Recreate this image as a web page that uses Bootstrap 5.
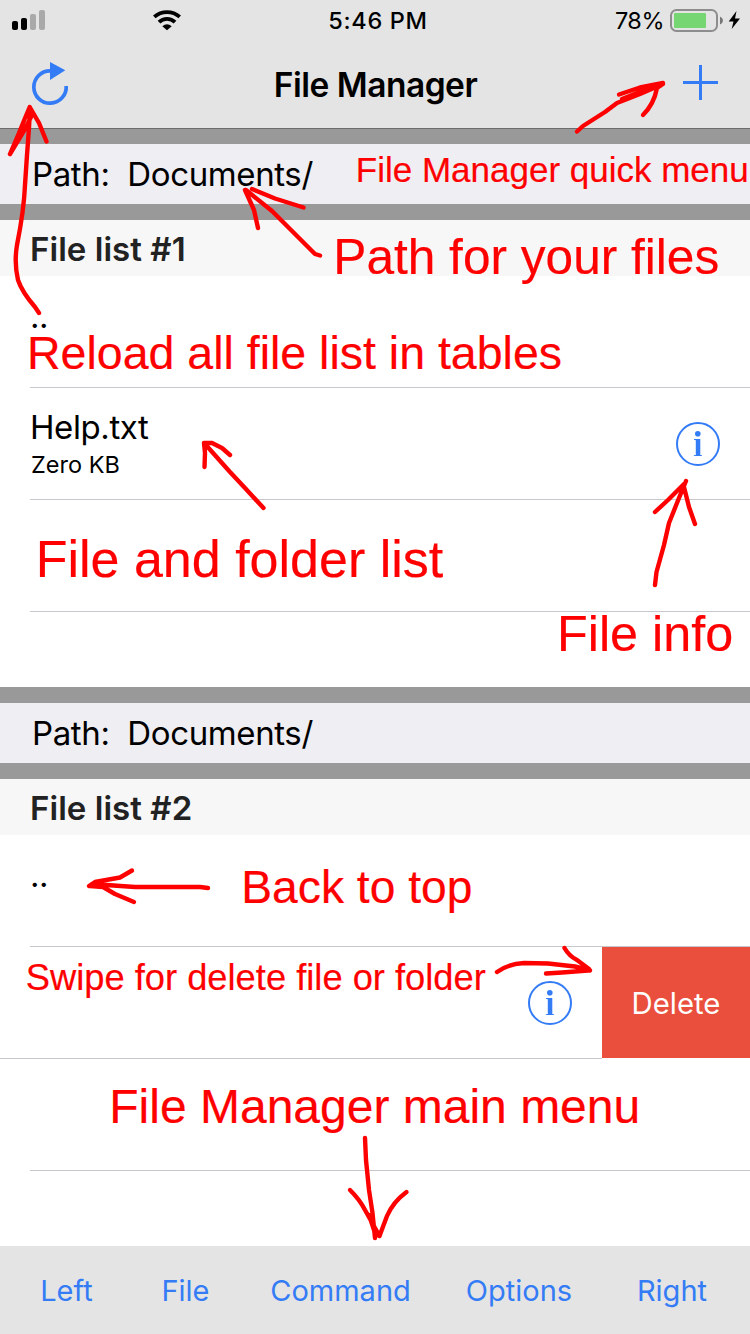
<!DOCTYPE html>
<html lang="en">
<head>
<meta charset="utf-8">
<meta name="viewport" content="width=device-width, initial-scale=1">
<title>File Manager</title>
<link href="https://cdn.jsdelivr.net/npm/bootstrap@5.3.0/dist/css/bootstrap.min.css" rel="stylesheet">
<style>
:root { --tint: #347cf6; --chrome: #e4e4e4; --divider: #999; --hairline: #c8c7cc; }
body { width: 750px; height: 1334px; overflow: hidden; background: #fff; color: #000; font-family: Inter, sans-serif; line-height: 1.2; }
.top-chrome { height: 129px; background: var(--chrome); border-bottom: 1px solid #6c6c6c; }
.status-row { height: 40px; font-size: 23.5px; }
.status-row > div { flex: 1 1 0; }
.clock { font-weight: 500; letter-spacing: .7px; padding-top: 2px; }
.charge { letter-spacing: -.5px; padding-top: 2px; }
.title-row { height: 88px; padding: 0 28px; }
.page-title { font-size: 33.5px; font-weight: 600; letter-spacing: -.5px; padding: 2px 0 0 1px; }
.pane { height: 559px; }
.pane-first { height: 558px; }
.gap-bar { height: 16px; background: var(--divider); }
.pane-first .gap-bar:first-child { height: 15px; }
.path-row { height: 60px; padding: 2px 0 0 32px; background: #efeef3; font-size: 33px; letter-spacing: -.38px; white-space: pre; }
.list-title { height: 56px; padding: 3px 0 0 30px; background: #f7f7f7; color: #222; font-size: 33px; font-weight: 600; letter-spacing: .05px; }
.file-row { height: 112px; padding-left: 30px; }
.file-row > .cell-body { border-bottom: 1px solid var(--hairline); height: 112px; }
.file-row > .parent-link { padding-bottom: 31px; }
.file-name { font-size: 33px; letter-spacing: -.4px; line-height: 38px; }
.file-size { font-size: 23.5px; line-height: 36px; padding: 1px 0 0 1px; }
.file-text { padding-top: 4px; }
.swiped { padding-left: 0; }
.delete-btn { width: 148px; height: 111px; padding-top: 3px; background: #ea4f3d; color: #fff; font-size: 29.3px; }
.bottom-bar { height: 88px; background: var(--chrome); display: grid; grid-template-columns: 133px 105px 205px 152px 154px; }
.bottom-bar a { padding-top: 2px; color: var(--tint); font-size: 29px; text-decoration: none; text-align: center; }
.notes { pointer-events: none; }
.notes text { font-family: "Liberation Sans", Arial, sans-serif; fill: #f00; stroke: #f00; stroke-width: .2; }
.notes path { fill: none; stroke: #f00; stroke-width: 4.4; stroke-linecap: round; stroke-linejoin: round; }
</style>
</head>
<body class="position-relative">
<svg class="d-none">
  <symbol id="info" viewBox="0 0 44 44">
    <circle cx="22" cy="22" r="21" fill="none" stroke="#347cf6" stroke-width="2"/>
    <circle cx="21.800" cy="11.700" r="2.800" fill="#347cf6"/>
    <path d="M18 17h6.300v15.900l1.700.4v.7h-8.200v-.7l2-.4V18.300L18 17.800z" fill="#347cf6"/>
  </symbol>
</svg>

<header class="top-chrome">
  <div class="status-row d-flex align-items-center">
    <div>
      <svg class="d-block" width="250" height="40">
        <rect x="12" y="21" width="6" height="9" rx="2"/>
        <rect x="21" y="18" width="6" height="12" rx="2"/>
        <rect x="30" y="14" width="6" height="16" rx="2" fill="#a9a9a9"/>
        <rect x="39" y="10" width="6" height="20" rx="2" fill="#a9a9a9"/>
        <g fill="none" stroke="#000" stroke-width="3.800">
          <path d="M154.300 16.900A19 19 0 0 1 179.700 16.900"/>
          <path d="M159 22.200A11.300 11.300 0 0 1 175 22.200"/>
        </g>
        <path d="M162.300 26.200A7.500 7.500 0 0 1 171.700 26.200L167 30.200z"/>
      </svg>
    </div>
    <div class="clock text-center ps-1">5:46 PM</div>
    <div class="d-flex align-items-center justify-content-end">
      <span class="charge">78%</span>
      <svg width="86" height="40" viewBox="1 0 86 40">
        <rect x="8" y="10" width="46" height="21" rx="5.500" fill="none" stroke="#8d8d8d" stroke-width="2"/>
        <rect x="11" y="13" width="32" height="15" rx="1" fill="#76d672"/>
        <path d="M57 16.500q3 1.500 3 4t-3 4z" fill="#777"/>
        <path d="M73.500 11L65.700 21.400h4.800L68.700 29L77 18.600h-5z"/>
      </svg>
    </div>
  </div>
  <div class="title-row d-flex align-items-center justify-content-between">
    <svg width="44" height="50" viewBox="28 59 44 50">
      <path d="M66.200 86A16.200 16.200 0 1 1 50 70.800" fill="none" stroke="#347cf6" stroke-width="3.700"/>
      <path d="M50 62L65.300 70.300L50 80z" fill="#347cf6"/>
    </svg>
    <span class="page-title">File Manager</span>
    <svg width="44" height="50" viewBox="678 59 44 50"><path d="M683 82.500h35M700.500 65v35" stroke="#347cf6" stroke-width="3"/></svg>
  </div>
</header>

<section class="pane pane-first">
  <div class="gap-bar"></div>
  <div class="path-row d-flex align-items-center">Path:  Documents/</div>
  <div class="gap-bar"></div>
  <div class="list-title d-flex align-items-center">File list #1</div>
  <div class="file-row"><div class="cell-body parent-link d-flex align-items-center file-name">..</div></div>
  <div class="file-row">
    <div class="cell-body d-flex align-items-center justify-content-between">
      <div class="file-text"><div class="file-name">Help.txt</div><div class="file-size">Zero KB</div></div>
      <svg width="44" height="44" style="margin-right:30px"><use href="#info"/></svg>
    </div>
  </div>
  <div class="file-row"><div class="cell-body"></div></div>
</section>

<section class="pane">
  <div class="gap-bar"></div>
  <div class="path-row d-flex align-items-center">Path:  Documents/</div>
  <div class="gap-bar"></div>
  <div class="list-title d-flex align-items-center">File list #2</div>
  <div class="file-row"><div class="cell-body parent-link d-flex align-items-center file-name">..</div></div>
  <div class="file-row swiped d-flex">
    <div class="cell-body flex-grow-1 d-flex align-items-center justify-content-end">
      <svg width="44" height="44" style="margin-right:30px"><use href="#info"/></svg>
    </div>
    <div class="delete-btn d-flex align-items-center justify-content-center">Delete</div>
  </div>
  <div class="file-row"><div class="cell-body"></div></div>
</section>

<nav class="bottom-bar align-items-center">
  <a href="#">Left</a><a href="#">File</a><a href="#">Command</a><a href="#">Options</a><a href="#">Right</a>
</nav>

<!-- Help notes drawn over the screen -->
<svg class="notes position-absolute top-0 start-0" width="750" height="1334">
  <text x="355.800" y="181.500" font-size="35">File Manager quick menu</text>
  <text x="333.300" y="274" font-size="49.600">Path for your files</text>
  <text x="27" y="369" font-size="46.500">Reload all file list in tables</text>
  <text x="35.700" y="577" font-size="52">File and folder list</text>
  <text x="557" y="650.500" font-size="50.300">File info</text>
  <text x="241.300" y="903" font-size="46.200">Back to top</text>
  <text x="25.800" y="990.300" font-size="36.300">Swipe for delete file or folder</text>
  <text x="109.300" y="1122.700" font-size="48">File Manager main menu</text>

  <path d="M39 313L35 307Q22 292 18 280Q14 263 17 245Q24 210 25 185L27 155L29 128L30 108M10 154L19 133Q25 118 29.700 107L39 123L46.500 141.500M10 154L25 129L31 117"/>
  <path d="M577 131.500L583 126L605 112L617 103L640 94L663 84M619 94.500L640 87.500L663 83M622 99L660 84M643 115Q654 104 657 88L663 84"/>
  <path d="M320 255.500L315 254L295 234L272 211L246 190M303.500 207.500L275 198.500L252 189M258 228L254 210L245 190"/>
  <path d="M263.500 508L245 488L230 472L205 444M204.500 467L205 453L204 443L212 443L222 448L230 455"/>
  <path d="M655 585L656.500 572L664 545L669 523L679 498L686 481M655 512L668 500L684 484M695 524L689 507L684 487"/>
  <path d="M208 888L200 887L135 887L92 884M132 870.500L120 877.500L95 882L89 886M134 902L115 894L103 887L90 886"/>
  <path d="M497 972Q508 964 524 963L548 963.500L575 966.500L590 970.500M564.500 948Q569 956 577 960L589 969M546 973.500L562 972.500L588 970.500"/>
  <path d="M365 1138L366 1160L369 1190L372.500 1213L375 1238M350 1190Q360 1200 365 1210L379.500 1236M406.500 1192Q393 1202 387 1216L379.500 1236M369 1215L376 1236"/>
</svg>
<script src="https://cdn.jsdelivr.net/npm/bootstrap@5.3.0/dist/js/bootstrap.bundle.min.js"></script>
</body>
</html>
